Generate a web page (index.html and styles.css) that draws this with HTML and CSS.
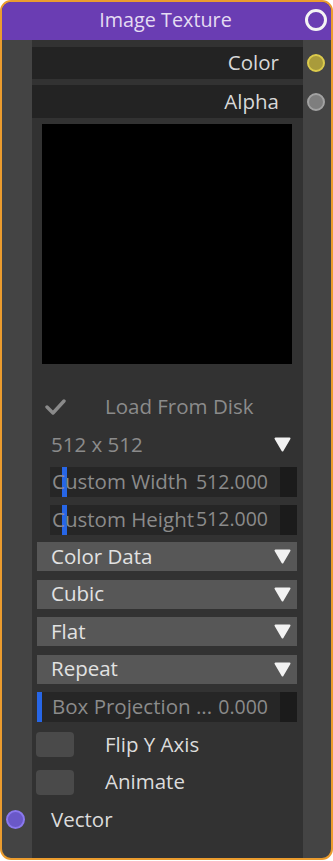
FILE: index.html
```html
<!DOCTYPE html>
<html>
<head>
<meta charset="utf-8">
<link rel="stylesheet" href="styles.css">
</head>
<body>
<div class="node">
  <div class="header">
    <span class="title">Image Texture</span>
    <span class="sock sock-main"></span>
  </div>
  <div class="body">
    <div class="main">
      <div class="out-row"><span>Color</span><span class="sock sock-r sock-color"></span></div>
      <div class="out-row out-alpha"><span>Alpha</span><span class="sock sock-r sock-alpha"></span></div>
      <div class="preview"></div>
      <div class="controls">
        <div class="row check-row">
          <svg class="tick" width="22" height="18" viewBox="0 0 22 18"><polyline points="2,9 8,15 19,3" fill="none" stroke="#8a8a8a" stroke-width="3.4" stroke-linecap="round" stroke-linejoin="round"/></svg>
          <span class="lbl dim">Load From Disk</span>
        </div>
        <div class="row drop plain">
          <span class="dim">512 x 512</span>
          <svg class="tri" width="17" height="15" viewBox="0 0 17 15"><polygon points="1.5,1.5 15.5,1.5 8.5,13.5" fill="#f2f2f2" stroke="#f2f2f2" stroke-width="2" stroke-linejoin="round"/></svg>
        </div>
        <div class="row slider indent">
          <span class="fill fill-mid"></span>
          <span class="s-lbl dim">Custom Width</span>
          <span class="s-val dim">512.000</span>
          <span class="s-end"></span>
        </div>
        <div class="row slider indent">
          <span class="fill fill-mid"></span>
          <span class="s-lbl dim">Custom Height</span>
          <span class="s-val dim">512.000</span>
          <span class="s-end"></span>
        </div>
        <div class="row drop boxed">
          <span>Color Data</span>
          <svg class="tri" width="17" height="15" viewBox="0 0 17 15"><polygon points="1.5,1.5 15.5,1.5 8.5,13.5" fill="#f2f2f2" stroke="#f2f2f2" stroke-width="2" stroke-linejoin="round"/></svg>
        </div>
        <div class="row drop boxed">
          <span>Cubic</span>
          <svg class="tri" width="17" height="15" viewBox="0 0 17 15"><polygon points="1.5,1.5 15.5,1.5 8.5,13.5" fill="#f2f2f2" stroke="#f2f2f2" stroke-width="2" stroke-linejoin="round"/></svg>
        </div>
        <div class="row drop boxed">
          <span>Flat</span>
          <svg class="tri" width="17" height="15" viewBox="0 0 17 15"><polygon points="1.5,1.5 15.5,1.5 8.5,13.5" fill="#f2f2f2" stroke="#f2f2f2" stroke-width="2" stroke-linejoin="round"/></svg>
        </div>
        <div class="row drop boxed">
          <span>Repeat</span>
          <svg class="tri" width="17" height="15" viewBox="0 0 17 15"><polygon points="1.5,1.5 15.5,1.5 8.5,13.5" fill="#f2f2f2" stroke="#f2f2f2" stroke-width="2" stroke-linejoin="round"/></svg>
        </div>
        <div class="row slider full">
          <span class="fill fill-left"></span>
          <span class="s-lbl dim">Box Projection ...</span>
          <span class="s-val dim">0.000</span>
          <span class="s-end"></span>
        </div>
        <div class="row toggle">
          <span class="box"></span>
          <span class="lbl">Flip Y Axis</span>
        </div>
        <div class="row toggle">
          <span class="box"></span>
          <span class="lbl">Animate</span>
        </div>
        <div class="row input-row">
          <span class="sock sock-l sock-vector"></span>
          <span>Vector</span>
        </div>
      </div>
    </div>
  </div>
</div>
</body>
</html>
```

FILE: styles.css
```css
* { box-sizing: border-box; }
html, body { margin: 0; padding: 0; background: #ffffff; }
body {
  font-family: "Open Sans", "Noto Sans", sans-serif;
  font-size: 20.5px;
  color: #dcdcdc;
}
.node {
  width: 333px;
  height: 860px;
  border: 2px solid #eb9c2e;
  border-radius: 11px;
  background: #444444;
  overflow: hidden;
  display: flex;
  flex-direction: column;
}
.header {
  position: relative;
  height: 38px;
  flex: none;
  background: #6a3db3;
  display: flex;
  align-items: center;
  justify-content: center;
  padding-bottom: 2px;
}
.title {
  color: #e4dcf2;
  font-size: 19.8px;
  line-height: 1;
  margin-right: 2px;
}
.body {
  flex: 1;
  display: flex;
  padding: 0 28px 0 30px;
}
.main {
  flex: 1;
  background: #323232;
  display: flex;
  flex-direction: column;
  padding-top: 7px;
}
.out-row {
  position: relative;
  height: 32px;
  background: #232323;
  display: flex;
  align-items: center;
  justify-content: flex-end;
  padding-right: 24px;
  padding-bottom: 2px;
  color: #d8d8d8;
}
.out-alpha { margin-top: 6px; height: 33px; }
.preview {
  width: 250px;
  height: 240px;
  background: #000000;
  margin: 6px 0 0 10px;
}
.controls {
  margin-top: 28px;
  display: flex;
  flex-direction: column;
  gap: 7.5px;
}
.row {
  position: relative;
  height: 30px;
  display: flex;
  align-items: center;
  white-space: nowrap;
  padding-bottom: 2px;
}
.dim { color: #8b8b8b; }
.check-row .tick { margin-left: 13px; margin-top: 2px; }
.check-row .lbl { margin-left: 38px; }
.drop { justify-content: space-between; padding: 0 12px 2px 19px; }
.drop .tri { display: block; margin-top: 2px; }
.drop.boxed {
  margin: 0 6px 1px 5px;
  height: 29px;
  background: #575757;
  padding: 0 6px 2px 14px;
  color: #e2e2e2;
}
.slider {
  background: #262626;
  margin-right: 6px;
  padding-left: 15px;
}
.slider.indent { margin-left: 18px; padding-left: 2px; }
.slider.full { margin-left: 5px; }
.fill {
  position: absolute;
  top: 0;
  bottom: 0;
  width: 5px;
  background: #2766e6;
}
.fill-mid { left: 12px; }
.fill-left { left: 0; }
.s-lbl { position: relative; }
.s-val { position: absolute; right: 29px; font-size: 19.5px; }
.s-end {
  position: absolute;
  right: 0;
  top: 0;
  bottom: 0;
  width: 17px;
  background: #1b1b1b;
}
.toggle .box {
  width: 38px;
  height: 25px;
  margin-left: 4px;
  margin-top: 2px;
  border-radius: 4px;
  background: #4a4a4a;
}
.toggle .lbl { margin-left: 31px; }
.input-row { padding-left: 19px; }
.sock {
  position: absolute;
  border-radius: 50%;
}
.sock-main {
  width: 22px;
  height: 22px;
  right: 4px;
  top: 7px;
  border: 3px solid #f4f4f4;
  background: #6a3db3;
}
.sock-r { right: -22px; top: 50%; margin-top: -9px; width: 18px; height: 18px; }
.sock-color { background: #a99b3b; border: 2.5px solid #dccb4c; }
.sock-alpha { background: #7e7e7e; border: 2.5px solid #a2a2a2; }
.sock-l { left: -26px; top: 50%; margin-top: -9.5px; width: 19px; height: 19px; }
.sock-vector { background: #6a58c8; border: 2.5px solid #8a78ee; }
```
